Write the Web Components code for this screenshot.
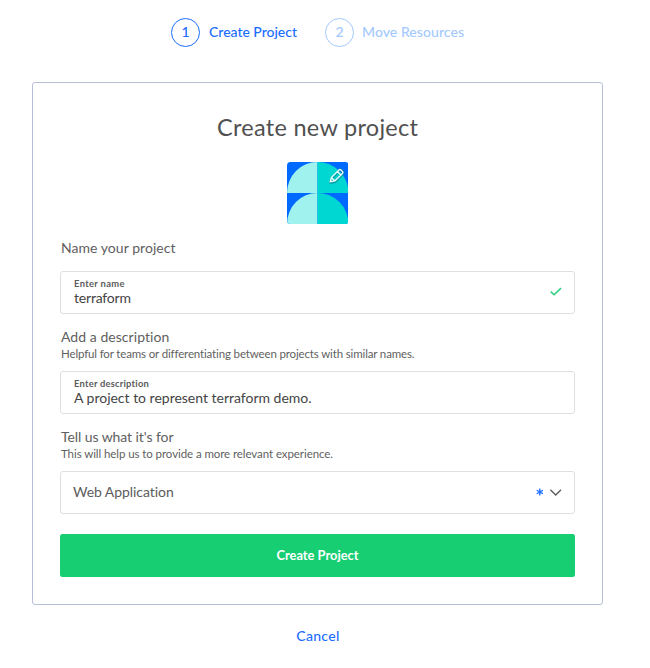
<!DOCTYPE html>
<html lang="en">
<head>
<meta charset="utf-8">
<title>Create new project</title>
<style>
body{margin:0;background:#fff;font-family:Lato,"Open Sans",sans-serif;color:#5b5b5b}
</style>
</head>
<body>
<project-page></project-page>
<script>
const define=(name,html,setup)=>customElements.define(name,class extends HTMLElement{
  connectedCallback(){
    if(this.shadowRoot)return;
    this.attachShadow({mode:'open'}).innerHTML=html;
    if(setup)setup(this,this.shadowRoot);
  }
});

/* One line of text, tracked so that it spans the given width. */
define('text-line',`<style>
:host{display:block;white-space:nowrap}
span{display:inline-block}
</style><span><slot></slot></span>`,(el,root)=>{
  const span=root.querySelector('span'),w=+el.getAttribute('width'),n=el.textContent.length;
  span.style.letterSpacing='0';
  const s=(w-span.getBoundingClientRect().width)/(n-1);
  span.style.letterSpacing=s+'px';
  span.style.marginRight=-s+'px';
});

define('step-item',`<style>
:host{display:flex;align-items:center;gap:9px;color:#1a6dff;font-size:14px;line-height:18px;font-weight:500}
:host([pending]){color:#a3c9ff;gap:8px}
.n{box-sizing:border-box;width:29px;height:29px;border:1.3px solid currentColor;border-radius:50%;display:flex;align-items:center;justify-content:center;padding-bottom:2px}
slot{display:block;padding-bottom:2px}
</style><div class="n"></div><slot></slot>`,(el,root)=>{root.querySelector('.n').textContent=el.getAttribute('number')});

define('project-avatar',`<style>
:host{display:block;width:61.5px;height:62px;margin:21px auto 0}svg{display:block}
</style><svg width="61.5" height="62" viewBox="0 0 61.5 62">
<defs><clipPath id="c"><rect width="61.5" height="62" rx="3.5"/></clipPath></defs>
<g clip-path="url(#c)"><rect width="61.5" height="62" fill="#0069ff"/>
<path d="M0 31A30.5 31 0 0 1 30.5 0V31ZM0 62A30.5 31 0 0 1 30.5 31V62Z" fill="#a0f2ee"/>
<path d="M61.5 31A31 31 0 0 0 30.5 0V31ZM61.5 62A31 31 0 0 0 30.5 31V62Z" fill="#00d7d2"/>
</g>
<g fill="none" stroke-linejoin="round"><path d="M43.6 20.6l1.2-4.4 7.8-7.8q1-1 2 0l1.4 1.4q1 1 0 2l-7.8 7.8z" stroke="#087f92" stroke-opacity=".6" stroke-width="3"/>
<path d="M43.2 19.8l1.2-4.2 7.6-7.6q1-1 2 0l1.4 1.4q1 1 0 2l-7.6 7.5zM44.5 15.8l3.2 3.1M50.4 9.6l3.3 3.3" stroke="#e9ffff" stroke-width="1.4"/></g>
</svg>`);

define('form-section',`<style>
:host{display:block}
.label{font-size:14px;line-height:18px;padding-left:1px;color:#606060}
.help{font-size:11.5px;line-height:16px;padding-left:1px;color:#5f5f5f}
</style><div class="label"><slot name="label"></slot></div><div class="help"><slot name="help"></slot></div><slot></slot>`,
(el,root)=>{if(!el.querySelector('[slot=help]'))root.querySelector('.help').remove()});

define('input-box',`<style>
:host{box-sizing:border-box;display:flex;align-items:center;justify-content:space-between;height:42.5px;border:1px solid #dfdfdf;border-radius:3px;padding:0 12px 0 13px}
.hint{font-size:9.4px;line-height:12px;font-weight:700;color:#5b5b5b}
.value{font-size:14px;line-height:16px;color:#444}
:host([select]) .value{color:#5b5b5b;margin-left:-1px}
</style><div><div class="hint"><slot name="hint"></slot></div><div class="value"><slot></slot></div></div>
<slot name="icon"></slot>`);

define('check-icon',`<style>:host,svg{display:block}</style>
<svg width="13" height="10" viewBox="0 0 13 10"><path d="M1.7 4.6l3.4 3.1L12 1.1" fill="none" stroke="#2bcf80" stroke-width="1.5"/></svg>`);
define('select-icons',`<style>:host{display:flex;align-items:center;gap:6px}</style>
<svg width="8" height="8" viewBox="0 0 8 8"><path d="M4.8 .4V7.6M1.7 2.2L7.9 5.8M7.9 2.2L1.7 5.8" stroke="#1a6dff" stroke-width="1.3" /></svg>
<svg width="13" height="9" viewBox="0 0 13 9"><path d="M1.4 1.7l5.3 5.3L12 1.7" fill="none" stroke="#5b5b5b" stroke-width="1.3"/></svg>`);

define('green-button',`<style>
:host{display:flex;align-items:center;justify-content:center;height:42.5px;background:#17ce73;border-radius:2.5px;color:#fff;font-size:12.8px;line-height:18px;font-weight:700}
</style><slot></slot>`);

define('project-card',`<style>
:host{display:block;box-sizing:border-box;width:571px;height:523px;margin:35px 0 0 32px;border:1px solid #b8bfda;border-radius:3px;padding:30px 27px 0}
</style><slot></slot>`);

define('project-page',`<style>
:host{display:block;box-sizing:border-box;height:668px;padding-top:18px;overflow:hidden}
nav{display:flex;gap:28px;padding-left:171px}
.title{display:flex;justify-content:center;font-size:23.5px;line-height:28px;color:#505050}
form-section{margin-top:14px}
form-section:first-of-type{margin-top:15px}
input-box{margin-top:9.5px}
form-section:first-of-type input-box{margin-top:14px}
green-button{margin-top:20.5px}
.cancel{display:flex;justify-content:center;width:635.5px;margin-top:21.5px;font-size:14px;line-height:18px;font-weight:500;color:#1a6dff}
</style>
<nav><step-item number="1"><text-line width="88">Create Project</text-line></step-item>
<step-item number="2" pending><text-line width="102">Move Resources</text-line></step-item></nav>
<project-card>
<div class="title"><text-line width="201">Create new project</text-line></div>
<project-avatar></project-avatar>
<form-section><text-line slot="label" width="114.5">Name your project</text-line>
<input-box><text-line slot="hint" width="50.5">Enter name</text-line><text-line width="57">terraform</text-line><check-icon slot="icon"></check-icon></input-box></form-section>
<form-section><text-line slot="label" width="108.5">Add a description</text-line><text-line slot="help" width="353.5">Helpful for teams or differentiating between projects with similar names.</text-line>
<input-box><text-line slot="hint" width="75">Enter description</text-line><text-line width="237.5">A project to represent terraform demo.</text-line></input-box></form-section>
<form-section><text-line slot="label" width="112.5">Tell us what it's for</text-line><text-line slot="help" width="272">This will help us to provide a more relevant experience.</text-line>
<input-box select><text-line width="101">Web Application</text-line><select-icons slot="icon"></select-icons></input-box></form-section>
<green-button><text-line width="82">Create Project</text-line></green-button>
</project-card>
<div class="cancel"><text-line width="43">Cancel</text-line></div>`);
</script>
</body>
</html>
